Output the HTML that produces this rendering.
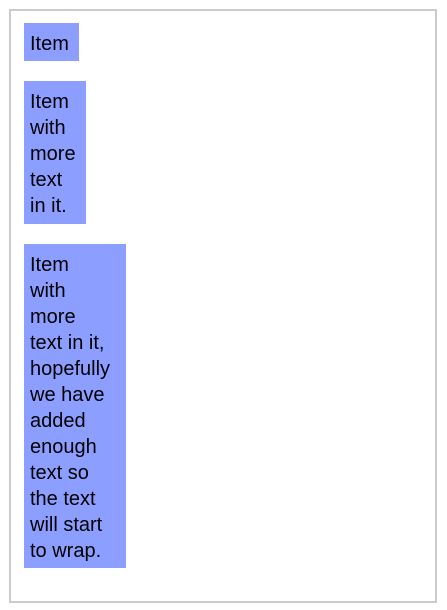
<!DOCTYPE html>
<html><head><style>
html,body{margin:0;padding:0;background:#fff;}
body{width:447px;height:610px;position:relative;overflow:hidden;font-family:"Liberation Sans",sans-serif;}
.frame{position:absolute;left:9px;top:9px;width:424px;height:590px;border:2px solid #cbcbcb;}
.it{position:absolute;left:24px;background:#8c9eff;color:#000;font-size:20px;line-height:26px;padding:8px 0 4px 6px;box-sizing:border-box;white-space:nowrap;}
</style></head><body>
<div class="frame"></div>
<div class="it" style="top:23px;width:55px;height:38px">Item</div>
<div class="it" style="top:81px;width:62px;height:143px">Item<br>with<br>more<br>text<br>in it.</div>
<div class="it" style="top:244px;width:102px;height:324px">Item<br>with<br>more<br>text in it,<br>hopefully<br>we have<br>added<br>enough<br>text so<br>the text<br>will start<br>to wrap.</div>
</body></html>
